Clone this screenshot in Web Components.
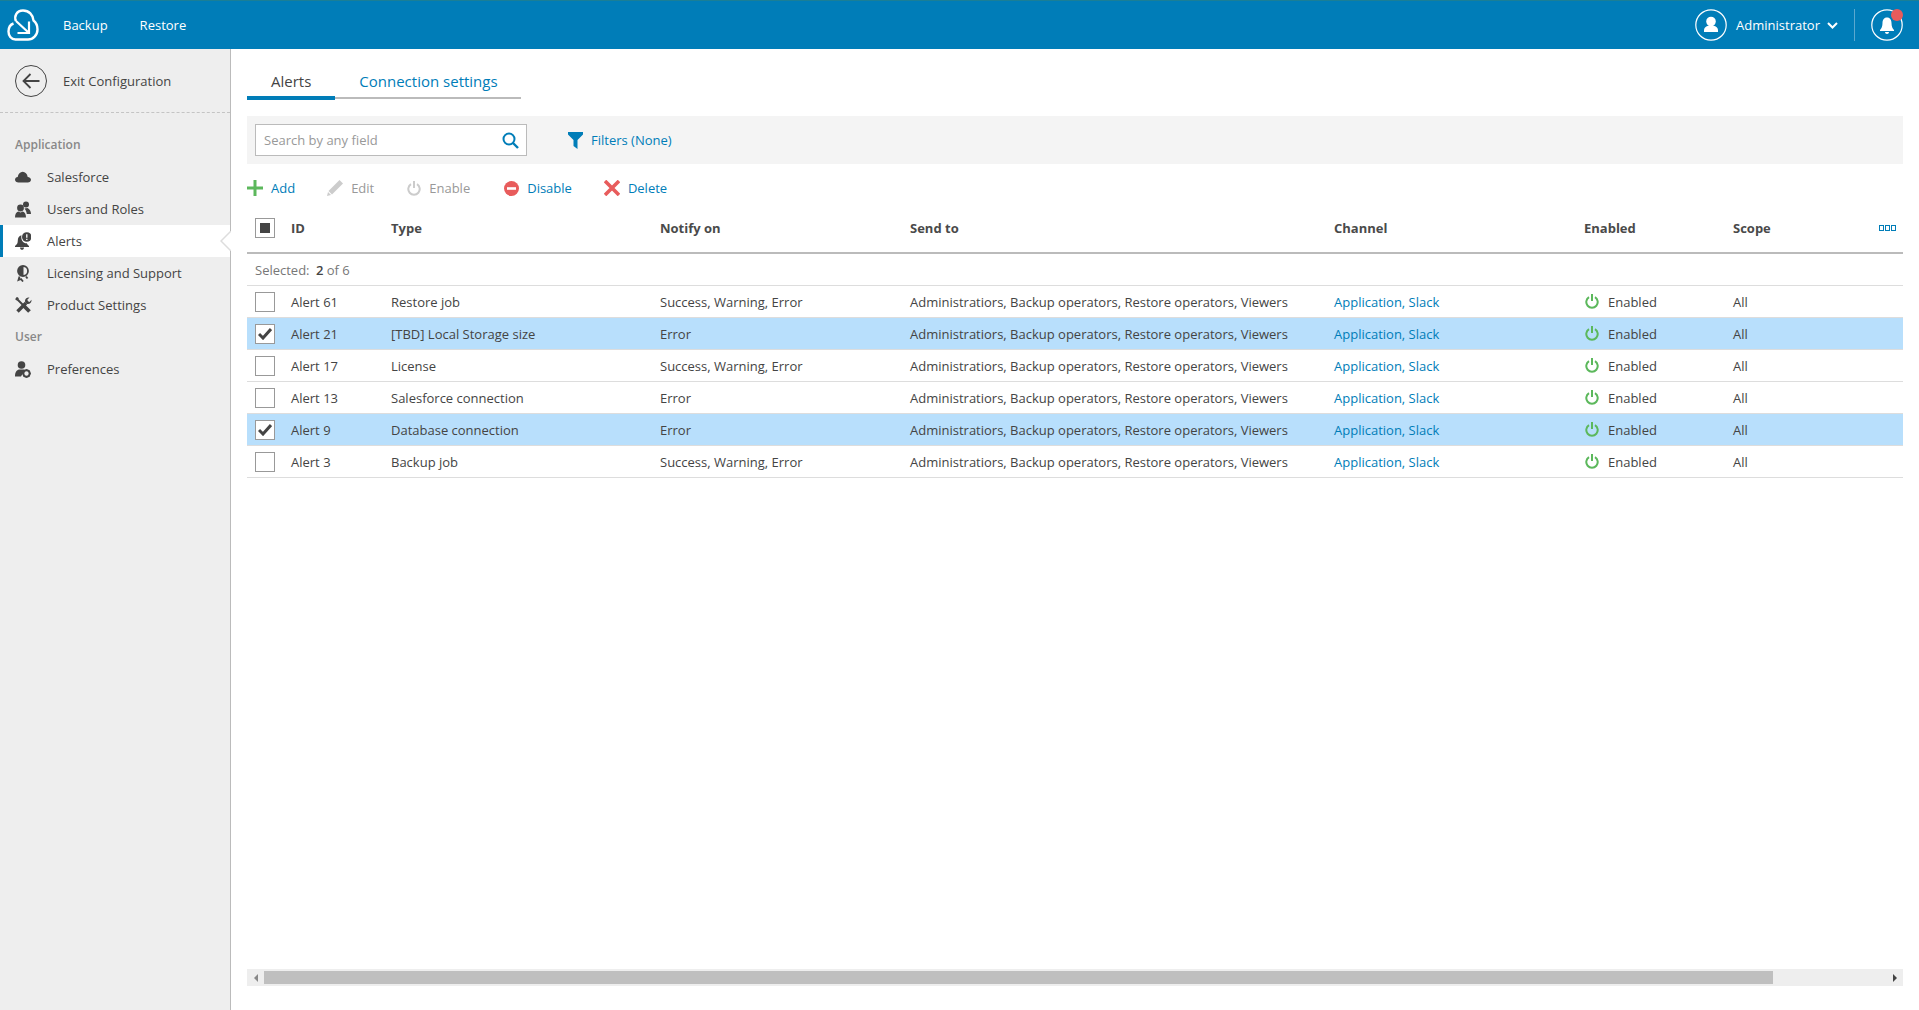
<!DOCTYPE html>
<html>
<head>
<meta charset="utf-8">
<title>Alerts</title>
<style>
  html, body { margin: 0; height: 100%; }
  body { font: 13px "Open Sans", sans-serif; color: #444; overflow: hidden; }
</style>
</head>
<body>
<app-shell></app-shell>
<script>
const ICONS = {
  logo: '<svg width="32" height="32" viewBox="0 0 32 32" fill="none" stroke="#fff" stroke-width="2.400"><path d="M9 12C6.800 7.500 9.500 1.500 16 1.500C22 1.500 26 6 26.500 11.500C29 13.500 30.500 17 30.500 20.500C30.500 26 26 30.500 21 30.500H8.500C4 30.500 1.500 26.500 1.500 22.500C1.500 18.500 3.800 15.500 6.500 14.500"/><path d="M9 12L22 24M22 12.500V24H10.500" stroke-width="2.200"/></svg>',
  back: '<svg width="32" height="32" viewBox="0 0 32 32" fill="none" stroke="#444"><circle cx="16" cy="16" r="15.500"/><path d="M24.500 16H8.500M15.500 9L8.500 16L15.500 23" stroke-width="1.800"/></svg>',
  cloud: '<svg width="16" height="16" viewBox="0 0 16 16" fill="#444"><path d="M3.500 13.500C1.500 13.500 0 12.300 0 10.700C0 9.200 1.200 8.100 2.700 8C3.200 5 5.200 2.800 7.700 2.800C10.200 2.800 12.200 5 12.700 7.900C14.600 8 16 9.200 16 10.800C16 12.400 14.600 13.500 12.700 13.500Z"/></svg>',
  users: '<svg width="16" height="17" viewBox="0 0 16 17" fill="#444"><circle cx="11" cy="3.500" r="3"/><path d="M9.500 7.500L12.500 7C14.500 8 16 10 16 13H11.800C11.500 11 10.800 9 9.500 7.500Z"/><circle cx="5.500" cy="7" r="3.400"/><path d="M0 16.500C0 13 1.200 11.200 3.200 10.500L5.500 11.500L7.800 10.500C9.800 11.200 11 13 11 16.500Z"/></svg>',
  alert: '<svg width="16" height="18" viewBox="0 0 16 18" fill="#444"><path d="M6.500 3.200C3.800 3.700 2.800 6 2.800 8.500C2.800 11 2 12.500 0 14V15H14V14C13 13.300 12.300 12.500 11.800 11.300C8 11.300 5.500 7.500 6.500 3.200Z"/><path d="M5 15.500H9C9 17 8 17.800 7 17.800C6 17.800 5 17 5 15.500Z"/><circle cx="11.800" cy="5" r="4.800"/><path d="M11.800 2.200V5.800M11.800 6.800V8" stroke="#fff" stroke-width="1.300" fill="none"/></svg>',
  license: '<svg width="16" height="17" viewBox="0 0 16 17" fill="none" stroke="#444"><g transform="translate(1)"><circle cx="7" cy="6" r="5" stroke-width="1.800"/><path d="M7 1.500A4.500 4.500 0 0 0 7 10.500Z" fill="#444"/><path d="M3.500 11.500L2.500 15L5 14L7 16.500" stroke-width="1.800"/><path d="M10 11.500L11.500 13.500" stroke-width="1.800"/></g></svg>',
  tools: '<svg width="17" height="17" viewBox="0 0 17 17" fill="none" stroke="#444"><path d="M1 1L3 2.500" stroke-width="3"/><path d="M2.500 2.500L9 9" stroke-width="2"/><path d="M8.500 8.500L14.500 14.500" stroke-width="3.800"/><path d="M2.500 14.500L11 6" stroke-width="3.400"/><path d="M16.500 3.500C16.500 6.200 13.800 7.800 11.500 6.800C9.600 5.500 9.500 2.800 11 1.500C12 0.600 13.200 0.300 14.500 0.500L12.300 2.700L13 4.300L14.600 5L16.400 2.800Z" fill="#444" stroke="none"/></svg>',
  prefs: '<svg width="16" height="17" viewBox="0 0 16 17" fill="#444"><circle cx="6.500" cy="4" r="3.800"/><path d="M0 15.500C0 11 1.800 9.200 4 8.500H9C10 8.800 10 9 9.500 9.500L6 15.500Z"/><circle cx="11.500" cy="12.500" r="3.200" fill="none" stroke="#444" stroke-width="2"/><path d="M11.500 8.300V10M11.500 15V16.700M7.300 12.500H9M14 12.500H15.700M8.500 9.500L9.700 10.700M13.300 14.300L14.500 15.500M14.500 9.500L13.300 10.700M9.700 14.300L8.500 15.500" stroke="#444" stroke-width="1.500"/></svg>',
  person: '<svg width="32" height="32" viewBox="0 0 32 32" fill="none"><circle cx="16" cy="16" r="15.200" stroke="#fff" stroke-width="1.200"/><circle cx="16" cy="12.500" r="4.800" fill="#fff"/><path d="M9 23V21C9 18.800 11 17.300 13.300 16.800H18.700C21 17.300 23 18.800 23 21V23Z" fill="#fff"/></svg>',
  bell: '<svg width="32" height="32" viewBox="0 0 32 32" fill="none"><circle cx="16" cy="16" r="15.200" stroke="#fff" stroke-width="1.200"/><path d="M16 8.500C12.800 8.500 11.500 11 11.500 14C11.500 17.500 10.500 19.500 9 21V22H23V21C21.500 19.500 20.500 17.500 20.500 14C20.500 11 19.200 8.500 16 8.500Z" fill="#fff"/><path d="M14 23H18C18 24.300 17 25 16 25C15 25 14 24.300 14 23Z" fill="#fff"/></svg>',
  chevron: '<svg width="11" height="7" viewBox="0 0 11 7" fill="none" stroke="#fff" stroke-width="2"><path d="M1 1L5.500 5.500L10 1"/></svg>',
  search: '<svg width="17" height="17" viewBox="0 0 17 17" fill="none" stroke="#007db8" stroke-width="2"><circle cx="7" cy="7" r="5.500"/><path d="M11 11L16 16" stroke-width="2.400"/></svg>',
  funnel: '<svg width="15" height="17" viewBox="0 0 15 17" fill="#007db8"><path d="M0 0H15V2.500L9.500 8V17L5.500 14V8L0 2.500Z"/></svg>',
  add: '<svg width="16" height="16" viewBox="0 0 16 16" fill="#5cb85c"><path d="M6.500 0H9.500V6.500H16V9.500H9.500V16H6.500V9.500H0V6.500H6.500Z"/></svg>',
  edit: '<svg width="16" height="16" viewBox="0 0 16 16" fill="#ccc"><path d="M12.500 0L16 3.500L5 14.500L1.500 11Z"/><path d="M1 12L4 15L0 16Z"/></svg>',
  power: '<svg width="14" height="15" viewBox="0 0 14 15" fill="none" stroke="currentColor" stroke-width="2"><path d="M4 3.200A5.700 5.700 0 1 0 10 3.200M7 0V7"/></svg>',
  disable: '<svg width="15" height="15" viewBox="0 0 15 15"><circle cx="7.500" cy="7.500" r="7.500" fill="#e85c5c"/><rect x="3" y="6.200" width="9" height="2.600" fill="#fff"/></svg>',
  remove: '<svg width="16" height="16" viewBox="0 0 16 16" fill="none" stroke="#e85c5c" stroke-width="3.600"><path d="M1 1L15 15M15 1L1 15"/></svg>'
};

// top bar: logo, two links, user menu and the bell
class TopBar extends HTMLElement {
  constructor() {
    super();
    this.attachShadow({ mode: 'open' });
    this.shadowRoot.innerHTML = `
      <style>
        :host { display: flex; align-items: center; height: 49px; background: #007db8; color: #fff;
          box-shadow: inset 0 1px 0 #1a7f96; flex: none; }
        .logo { display: flex; margin: 0 0 0 7px; }
        .nav { margin-left: 24px; display: flex; gap: 32px; }
        .right { margin-left: auto; display: flex; align-items: center; }
        .user { margin-left: 9px; margin-right: 7px; }
        .chev { display: flex; margin-top: 1px; }
        .sep { width: 1px; height: 32px; background: #5aa8cf; margin: 0 16px 0 16px; }
        .bell { position: relative; display: flex; margin-right: 16px; margin-left: 0; }
        .dot { position: absolute; top: 0; right: 0; width: 12px; height: 12px; border-radius: 50%; background: #e85c5c; }
      </style>
      <span class="logo">${ICONS.logo}</span>
      <div class="nav"><span>Backup</span><span>Restore</span></div>
      <div class="right">
        <span style="display:flex">${ICONS.person}</span>
        <span class="user">Administrator</span>
        <span class="chev">${ICONS.chevron}</span>
        <span class="sep"></span>
        <span class="bell">${ICONS.bell}<span class="dot"></span></span>
      </div>`;
  }
}
customElements.define('top-bar', TopBar);

class NavItem extends HTMLElement {
  constructor() {
    super();
    this.attachShadow({ mode: 'open' });
    this.shadowRoot.innerHTML = `
      <style>
        :host { display: flex; align-items: center; height: 32px; padding-left: 15px; position: relative; color: #444; }
        :host([active]) { background: #fff; box-shadow: inset 3px 0 0 #007db8; }
        .icon { width: 32px; display: flex; }
        .notch { display: none; position: absolute; right: -1px; top: 6px; width: 11px; height: 20px; background: #fff; }
        :host([active]) .notch { display: block; }
        .notch svg { display: block; }
      </style>
      <span class="icon"><slot name="icon"></slot></span><slot></slot>
      <span class="notch"><svg width="11" height="20" viewBox="0 0 11 20" fill="none" stroke="#ddd" stroke-width="1.500"><path d="M11 0L1 10L11 20"/></svg></span>`;
  }
}
customElements.define('nav-item', NavItem);

class SideBar extends HTMLElement {
  constructor() {
    super();
    this.attachShadow({ mode: 'open' });
    const item = (icon, label, active) =>
      `<nav-item ${active ? 'active' : ''}><span slot="icon" style="display:flex">${ICONS[icon]}</span>${label}</nav-item>`;
    this.shadowRoot.innerHTML = `
      <style>
        :host { display: block; width: 230px; flex: none; background: #eee; border-right: 1px solid #bbb; box-sizing: content-box; }
        .exit { display: flex; align-items: flex-start; padding: 16px 0 0 15px; border-bottom: 1px dashed #c4c4c4; height: 47px; line-height: 32px; }
        .exit span { display: flex; margin-right: 16px; }
        h4 { margin: 0; font: inherit; font-size: 12px; font-weight: 600; color: #888; height: 32px; line-height: 32px; padding-left: 15px; }
        .first { margin-top: 16px; }
      </style>
      <div class="exit"><span>${ICONS.back}</span>Exit Configuration</div>
      <h4 class="first">Application</h4>
      ${item('cloud', 'Salesforce')}
      ${item('users', 'Users and Roles')}
      ${item('alert', 'Alerts', true)}
      ${item('license', 'Licensing and Support')}
      ${item('tools', 'Product Settings')}
      <h4>User</h4>
      ${item('prefs', 'Preferences')}`;
  }
}
customElements.define('side-bar', SideBar);

class CheckBox extends HTMLElement {
  constructor() {
    super();
    this.attachShadow({ mode: 'open' });
    const state = this.getAttribute('state');
    let mark = '';
    if (state === 'checked') mark = '<svg width="14" height="12" viewBox="0 0 14 12" fill="none" stroke="#444" stroke-width="3"><path d="M1 6L5 10L13 1"/></svg>';
    if (state === 'mixed') mark = '<i></i>';
    this.shadowRoot.innerHTML = `
      <style>
        :host { display: flex; align-items: center; justify-content: center; width: 20px; height: 20px; box-sizing: border-box;
          border: 1px solid #999; background: #fff; flex: none; }
        i { width: 10px; height: 10px; background: #444; display: block; }
      </style>${mark}`;
  }
}
customElements.define('check-box', CheckBox);

const GRID = 'grid-template-columns: 44px 100px 269px 250px 424px 250px 149px 1fr';

class AlertRow extends HTMLElement {
  constructor() {
    super();
    this.attachShadow({ mode: 'open' });
    const a = name => this.getAttribute(name);
    const selected = this.hasAttribute('selected');
    this.shadowRoot.innerHTML = `
      <style>
        :host { display: grid; ${GRID}; height: 31px; align-items: center; border-bottom: 1px solid #ddd; white-space: nowrap; }
        :host([selected]) { background: #b8dffc; }
        .c { padding-left: 8px; display: flex; }
        a { color: #007db8; }
        .en { display: flex; align-items: center; gap: 9px; padding-left: 1px; color: #5cb85c; }
        .en span { color: #444; }
        .en svg { display: block; }
      </style>
      <div class="c"><check-box ${selected ? 'state="checked"' : ''}></check-box></div>
      <div>${a('alert')}</div>
      <div>${a('kind')}</div>
      <div>${a('notify')}</div>
      <div>Administratiors, Backup operators, Restore operators, Viewers</div>
      <div><a>Application, Slack</a></div>
      <div class="en">${ICONS.power}<span>Enabled</span></div>
      <div>All</div>`;
  }
}
customElements.define('alert-row', AlertRow);

class AlertsTable extends HTMLElement {
  constructor() {
    super();
    this.attachShadow({ mode: 'open' });
    this.shadowRoot.innerHTML = `
      <style>
        :host { display: block; }
        .head { display: grid; ${GRID}; height: 50px; align-items: center; font-weight: 700; border-bottom: 2px solid #bbb; color: #4a4a4a; }
        .head > div:not(.c) { padding-top: 1px; }
        .c { padding-left: 8px; display: flex; padding-top: 1px; }
        .scope { display: flex; align-items: center; justify-content: space-between; }
        .more { display: flex; gap: 1px; padding-right: 7px; }
        .more i { width: 3px; height: 4px; border: 1px solid #007db8; display: block; }
        .sel { height: 31px; line-height: 32px; padding-left: 8px; border-bottom: 1px solid #ddd; color: #777; }
        .sel b { color: #444; font-weight: 600; margin-left: 3px; }
      </style>
      <div class="head">
        <div class="c"><check-box state="mixed"></check-box></div>
        <div>ID</div><div>Type</div><div>Notify on</div><div>Send to</div><div>Channel</div><div>Enabled</div>
        <div class="scope">Scope<div class="more"><i></i><i></i><i></i></div></div>
      </div>
      <div class="sel">Selected: <b>2</b> of 6</div>
      <slot></slot>`;
  }
}
customElements.define('alerts-table', AlertsTable);

class ToolBar extends HTMLElement {
  constructor() {
    super();
    this.attachShadow({ mode: 'open' });
    const btn = (icon, label, off, extra) =>
      `<span class="b ${off ? 'off' : ''}" style="margin-left:${extra || 0}px">${ICONS[icon]}${label}</span>`;
    this.shadowRoot.innerHTML = `
      <style>
        :host { display: flex; height: 28px; margin-top: 10px; align-items: center; gap: 32px; color: #007db8; }
        .b { display: flex; align-items: center; gap: 8px; }
        .off { color: #999; }
        .off svg { color: #ccc; }
      </style>
      ${btn('add', 'Add')}${btn('edit', 'Edit', true)}${btn('power', 'Enable', true, 1)}${btn('disable', 'Disable', false, 2)}${btn('remove', 'Delete')}`;
  }
}
customElements.define('tool-bar', ToolBar);

class FilterBar extends HTMLElement {
  constructor() {
    super();
    this.attachShadow({ mode: 'open' });
    this.shadowRoot.innerHTML = `
      <style>
        :host { display: flex; align-items: center; height: 48px; background: #f4f4f4; padding-left: 8px; margin-top: 17px; }
        .box { display: flex; align-items: center; justify-content: space-between; width: 272px; height: 32px; box-sizing: border-box;
          background: #fff; border: 1px solid #bbb; padding: 0 7px 0 8px; color: #999; }
        .box svg { display: block; }
        .f { display: flex; align-items: center; gap: 8px; margin-left: 41px; color: #007db8; }
      </style>
      <div class="box">Search by any field ${ICONS.search}</div>
      <div class="f">${ICONS.funnel}Filters (None)</div>`;
  }
}
customElements.define('filter-bar', FilterBar);

class TabStrip extends HTMLElement {
  constructor() {
    super();
    this.attachShadow({ mode: 'open' });
    this.shadowRoot.innerHTML = `
      <style>
        :host { display: inline-flex; font-size: 15px; margin-top: 16px; border-bottom: 2px solid #bbb; height: 32px; align-self: flex-start; }
        span { display: block; padding: 0 24px; line-height: 32px; color: #007db8; height: 32px; box-sizing: border-box; }
        span + span { padding-right: 23px; }
        .on { color: #444; border-bottom: 4px solid #007db8; margin-bottom: -3px; height: 35px; }
      </style>
      <span class="on">Alerts</span><span>Connection settings</span>`;
  }
}
customElements.define('tab-strip', TabStrip);

class HScroll extends HTMLElement {
  constructor() {
    super();
    this.attachShadow({ mode: 'open' });
    this.shadowRoot.innerHTML = `
      <style>
        :host { display: flex; align-items: center; height: 17px; background: #eee; margin-top: auto; margin-bottom: 24px; }
        .a { width: 17px; display: flex; justify-content: center; flex: none; }
        .a i { border: 4px solid transparent; display: block; }
        .l i { border-right: 4px solid #888; border-left: 0; }
        .r i { border-left: 4px solid #444; border-right: 0; }
        .thumb { width: 1509px; height: 13px; background: #bfbfbf; flex: none; }
      </style>
      <span class="a l"><i></i></span><span class="thumb"></span><span style="flex:1"></span><span class="a r"><i></i></span>`;
  }
}
customElements.define('h-scroll', HScroll);

class AppShell extends HTMLElement {
  constructor() {
    super();
    this.attachShadow({ mode: 'open' });
    const rows = [
      ['Alert 61', 'Restore job', 'Success, Warning, Error'],
      ['Alert 21', '[TBD] Local Storage size', 'Error', 1],
      ['Alert 17', 'License', 'Success, Warning, Error'],
      ['Alert 13', 'Salesforce connection', 'Error'],
      ['Alert 9', 'Database connection', 'Error', 1],
      ['Alert 3', 'Backup job', 'Success, Warning, Error']
    ].map(r => `<alert-row alert="${r[0]}" kind="${r[1]}" notify="${r[2]}" ${r[3] ? 'selected' : ''}></alert-row>`).join('');
    this.shadowRoot.innerHTML = `
      <style>
        :host { display: flex; flex-direction: column; height: 1010px; width: 1919px; }
        .body { display: flex; flex: 1; min-height: 0; }
        main { flex: 1; display: flex; flex-direction: column; padding: 0 16px 0 16px; min-width: 0; }
      </style>
      <top-bar></top-bar>
      <div class="body">
        <side-bar></side-bar>
        <main>
          <tab-strip></tab-strip>
          <filter-bar></filter-bar>
          <tool-bar></tool-bar>
          <alerts-table>${rows}</alerts-table>
          <h-scroll></h-scroll>
        </main>
      </div>`;
  }
}
customElements.define('app-shell', AppShell);
</script>
</body>
</html>
